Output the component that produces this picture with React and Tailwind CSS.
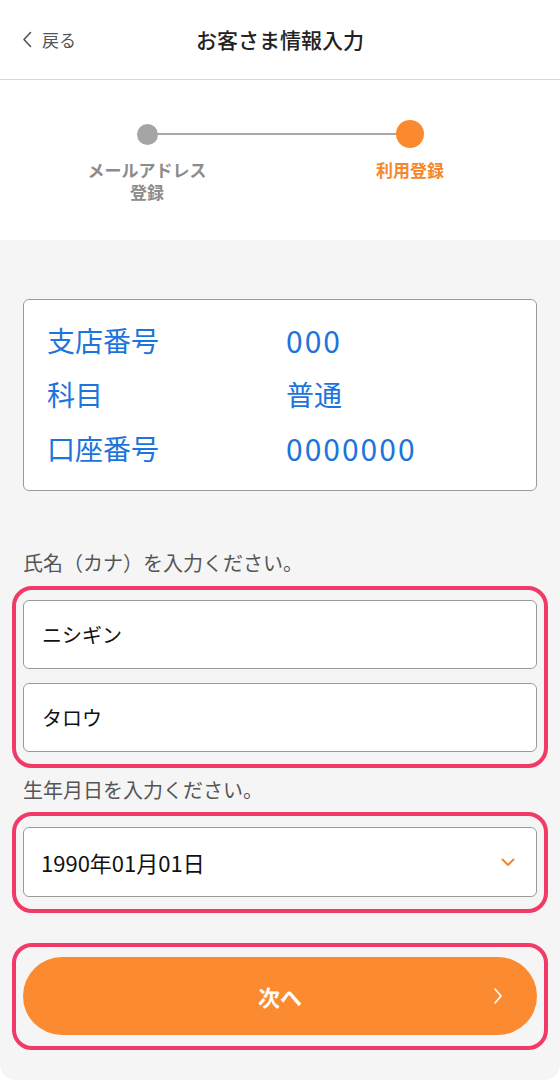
import React from 'react';

const font = { fontFamily: '"Noto Sans CJK JP", "Noto Sans", sans-serif' };

const InfoRow = ({ label, value, digits }) => (
  <div className="flex items-center h-[54px] text-[28px] text-[#1c74dc]">
    <span className="w-[239px]">{label}</span>
    <span className={digits ? 'text-[30px] tracking-[2px]' : 'text-[28px]'}>{value}</span>
  </div>
);

const Highlight = ({ children, className = '' }) => (
  <div className={`-mx-[11px] px-[7px] border-[4px] border-[#f23a68] rounded-[20px] ${className}`}>
    {children}
  </div>
);

const TextField = ({ value }) => (
  <div className="h-[69px] bg-white border border-[#9a9a9a] rounded-[6px] flex items-center px-[18px] text-[20px] text-[#111]">
    {value}
  </div>
);

export default function App() {
  return (
    <div className="w-[560px] h-[1080px] bg-white" style={font}>
      {/* header */}
      <header className="relative h-[80px] border-b border-[#d6d6d6] flex items-center justify-center">
        <div className="absolute left-[22px] top-0 h-full flex items-center gap-[10px] text-[#555] text-[17px]">
          <svg width="10" height="17" viewBox="0 0 10 17" fill="none">
            <path d="M8.5 1.5L2 8.5l6.5 7" stroke="#555" strokeWidth="1.6" strokeLinecap="round" strokeLinejoin="round" />
          </svg>
          <span>戻る</span>
        </div>
        <h1 className="text-[21px] font-medium text-[#222]">お客さま情報入力</h1>
      </header>

      {/* stepper */}
      <section className="h-[160px] relative">
        <div className="absolute left-[147px] right-[150px] top-[53px] h-[2px] bg-[#a8a8a8]" />
        <div className="absolute left-[137px] w-[21px] h-[21px] rounded-full bg-[#a5a5a5]" style={{ top: 44 }} />
        <div className="absolute left-[396px] w-[28px] h-[28px] rounded-full bg-[#fb8a2e]" style={{ top: 40 }} />
        <div className="absolute left-[47px] w-[200px] top-[79px] text-center text-[17px] leading-[22px] font-semibold text-[#8c8c8c]">
          <div>メールアドレス</div>
          <div>登録</div>
        </div>
        <div className="absolute left-[310px] w-[200px] top-[79px] text-center text-[17px] leading-[22px] font-bold text-[#f5872a]">
          利用登録
        </div>
      </section>

      {/* form */}
      <main className="bg-[#f5f5f5] h-[840px] rounded-b-[16px] px-[23px] pt-[59px]">
        <div className="bg-white border border-[#9a9a9a] rounded-[6px] px-[23px] pt-[13px] pb-[15px]">
          <InfoRow label="支店番号" value="000" digits />
          <InfoRow label="科目" value="普通" />
          <InfoRow label="口座番号" value="0000000" digits />
        </div>

        <p className="mt-[59px] text-[20px] leading-[26px] text-[#555]">氏名（カナ）を入力ください。</p>
        <Highlight className="mt-[10px] pt-[10px] pb-[12px] flex flex-col gap-[14px]">
          <TextField value="ニシギン" />
          <TextField value="タロウ" />
        </Highlight>

        <p className="mt-[9px] text-[20px] leading-[26px] text-[#555]">生年月日を入力ください。</p>
        <Highlight className="mt-[9px] pt-[11px] pb-[12px]">
          <div className="h-[70px] bg-white border border-[#9a9a9a] rounded-[6px] flex items-center justify-between pl-[17px] pr-[21px] text-[22px] text-[#111]">
            <span>1990年01月01日</span>
            <svg width="14" height="9" viewBox="0 0 14 9" fill="none">
              <path d="M1.5 1.5L7 7l5.5-5.5" stroke="#f5872a" strokeWidth="2" strokeLinecap="round" strokeLinejoin="round" />
            </svg>
          </div>
        </Highlight>

        <Highlight className="mt-[30px] pt-[10px] pb-[11px]">
          <button className="relative w-full h-[78px] rounded-full bg-[#fb8a30] flex items-center justify-center text-white text-[22px] font-bold">
            次へ
            <svg className="absolute right-[34px]" width="10" height="18" viewBox="0 0 10 18" fill="none">
              <path d="M2 2l6 7-6 7" stroke="#fff" strokeWidth="1.6" strokeLinecap="round" strokeLinejoin="round" />
            </svg>
          </button>
        </Highlight>
      </main>
    </div>
  );
}
